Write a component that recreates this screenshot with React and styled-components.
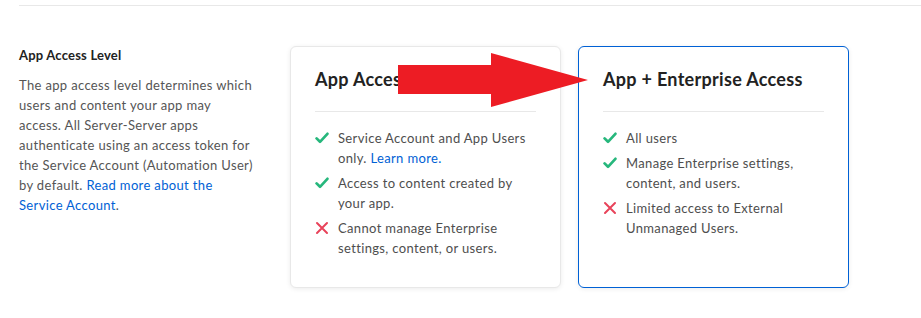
import React from 'react'
import styled, { createGlobalStyle } from 'styled-components';

const GlobalStyle = createGlobalStyle`
    body {
        margin: 0;
        background: #ffffff;
        font-family: Lato, "Open Sans", sans-serif;
    }
`

const Page = styled.div`
    position: relative;
    width: 921px;
    height: 318px;
    padding: 5px 0 0 19px;
    box-sizing: border-box;
    overflow: hidden;
`

const Rule = styled.div`
    height: 1px;
    background-color: #e8e8e8;
`

const Row = styled.div`
    display: flex;
    align-items: flex-start;
    margin-top: 40px;
`

const Intro = styled.div`
    width: 271px;
    flex-shrink: 0;

    h4{
        margin: 0;
        font-size: 13px;
        line-height: 18px;
        font-weight: 700;
        letter-spacing: 0.2px;
        color: #222222;
    }

    p{
        margin: 11px 0 0;
        width: 234px;
        font-size: 13px;
        line-height: 20px;
        letter-spacing: 0.35px;
        color: #555555;
    }
`

const Link = styled.a`
    color: #0061d5;
    text-decoration: none;
`

const Cards = styled.div`
    display: flex;
    gap: 17px;
`

const Card = styled.div`
    width: 271px;
    height: 242px;
    box-sizing: border-box;
    padding: 20px 24px 0;
    border: 1px solid ${props => props.selected ? '#0061d5' : '#e8e8e8'};
    border-radius: 6px;
    box-shadow: 0 1px 5px rgba(0, 0, 0, 0.08);
    background: #ffffff;

    h3{
        margin: 0;
        font-size: 18px;
        line-height: 24px;
        font-weight: 700;
        letter-spacing: 0.3px;
        color: #222222;
        white-space: nowrap;
    }
`

const Divider = styled.div`
    height: 1px;
    margin-top: 20px;
    background-color: #e8e8e8;
`

const List = styled.ul`
    list-style: none;
    margin: 16px 0 0;
    padding: 0;
    display: flex;
    flex-direction: column;
    gap: 5px;
`

const Item = styled.li`
    display: flex;
    gap: 9px;
    font-size: 13px;
    line-height: 20px;
    letter-spacing: 0.35px;
    color: #4e4e4e;
`

const IconBox = styled.span`
    flex-shrink: 0;
    width: 14px;
    height: 20px;
    display: flex;
    align-items: center;
    justify-content: center;
`

const Arrow = styled.svg`
    position: absolute;
    left: 0;
    top: 0;
    pointer-events: none;
`

function Mark({ ok }) {
    return (
        <IconBox>
            {ok ? (
                <svg width="14" height="14" viewBox="0 0 14 14">
                    <path d="M1.6 7.4 L5 10.8 L12.4 2.8" fill="none" stroke="#26b77c" strokeWidth="2.7" strokeLinecap="round" strokeLinejoin="round" />
                </svg>
            ) : (
                <svg width="14" height="14" viewBox="0 0 14 14">
                    <path d="M2 2 L12 12 M12 2 L2 12" fill="none" stroke="#e8435a" strokeWidth="2" strokeLinecap="round" />
                </svg>
            )}
        </IconBox>
    );
}

const cards = [
    {
        title: 'App Access Only',
        items: [
            { ok: true, text: 'Service Account and App Users only.', link: 'Learn more.' },
            { ok: true, text: 'Access to content created by your app.' },
            { ok: false, text: 'Cannot manage Enterprise settings, content, or users.' },
        ],
    },
    {
        title: 'App + Enterprise Access',
        selected: true,
        items: [
            { ok: true, text: 'All users' },
            { ok: true, text: 'Manage Enterprise settings, content, and users.' },
            { ok: false, text: 'Limited access to External Unmanaged Users.' },
        ],
    },
];

function App() {
    return (
        <Page>
            <GlobalStyle />
            <Rule />
            <Row>
                <Intro>
                    <h4>App Access Level</h4>
                    <p>
                        The app access level determines which users and content your app may access.
                        All Server-Server apps authenticate using an access token for the Service
                        Account (Automation User) by default. <Link href="#">Read more about the Service Account</Link>.
                    </p>
                </Intro>
                <Cards>
                    {cards.map(card => (
                        <Card key={card.title} selected={card.selected}>
                            <h3>{card.title}</h3>
                            <Divider />
                            <List>
                                {card.items.map(item => (
                                    <Item key={item.text}>
                                        <Mark ok={item.ok} />
                                        <span>
                                            {item.text}
                                            {item.link && <> <Link href="#">{item.link}</Link></>}
                                        </span>
                                    </Item>
                                ))}
                            </List>
                        </Card>
                    ))}
                </Cards>
            </Row>
            <Arrow width="921" height="318" viewBox="0 0 921 318">
                <polygon points="398,65 491,65 491,53 588,80 491,107 491,94 398,94" fill="#ed1c24" />
            </Arrow>
        </Page>
    );
}

export default App;
